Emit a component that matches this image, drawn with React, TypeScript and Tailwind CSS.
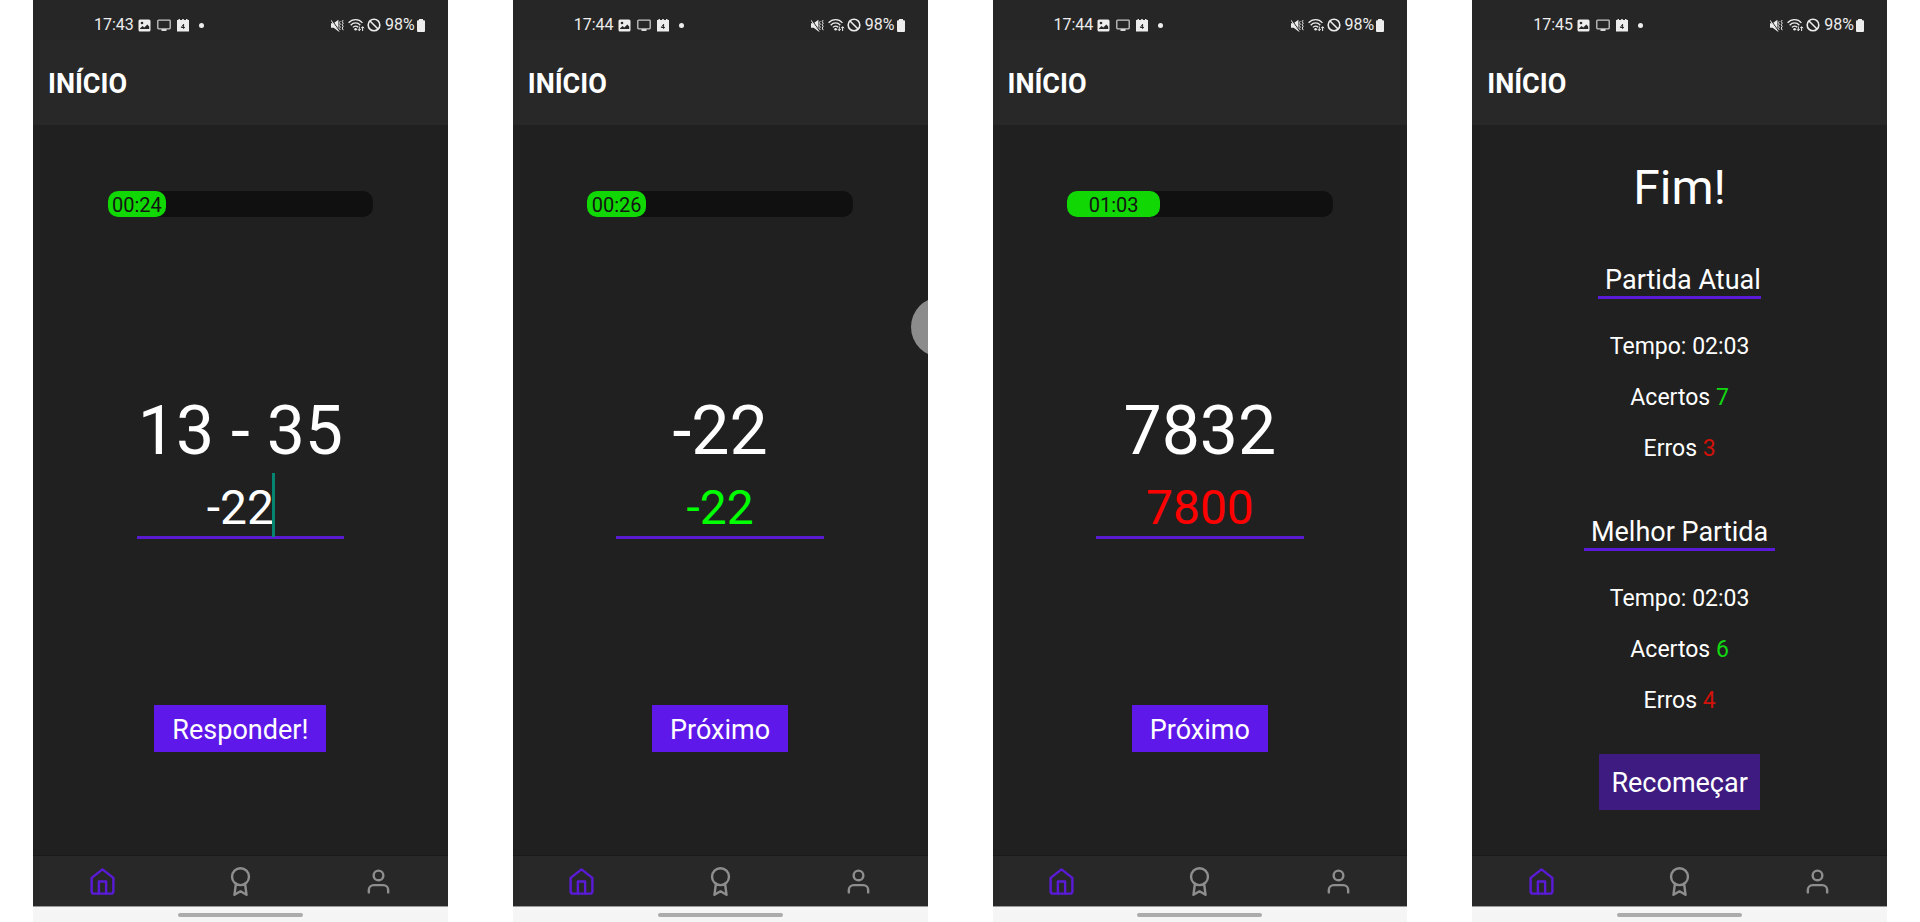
import type { ReactNode } from "react";
import { FiAward, FiHome, FiUser } from "react-icons/fi";

function StatusBar({ time }: { time: string }) {
  return (
    <div className="flex h-10 items-center justify-between bg-[#262626] pt-2.5 pl-[61px] pr-[23px] text-base leading-5 text-[#ededed]">
      <div className="flex items-center">
        <span>{time}</span>
        <svg className="ml-1" width="13" height="13" viewBox="0 0 13 13" aria-hidden="true">
          <rect x="0.5" y="0.5" width="12" height="12" rx="1.5" fill="#ededed" />
          <circle cx="4" cy="4" r="1.3" fill="#262626" />
          <path d="M2 9.5 4.5 7l1.8 1.6L9.3 5.5 11.2 7.6V10H2z" fill="#262626" />
        </svg>
        <svg className="ml-1.5" width="14" height="13" viewBox="0 0 14 13" aria-hidden="true">
          <rect x="0.8" y="1.2" width="12.4" height="8.6" rx="0.8" fill="none" stroke="#c8c8c8" strokeWidth="1.3" />
          <path d="M4.5 10h5v2h-5z" fill="#d8d8d8" />
        </svg>
        <svg className="ml-1.5" width="12" height="13" viewBox="0 0 12 13" aria-hidden="true">
          <path d="M0 1h1.500V0h1.500v1h2.200V0h1.600v1H9V0h1.500v1H12v11.500H0z" fill="#ededed" />
          <path d="M6.600 9.800V5.200L4.300 8.500h3.600" fill="none" stroke="#262626" strokeWidth="1" />
        </svg>
        <span className="ml-2.5 size-[5px] rounded-full bg-[#ededed]" />
      </div>
      <div className="flex items-center">
        <svg width="13" height="13" viewBox="0 0 13 13" aria-hidden="true">
          <path d="M0 4.2h2.6L7.4 0.8v11.4L2.6 8.8H0z" fill="#ededed" />
          <path d="M0.400 0.600 8.600 12.400" stroke="#262626" strokeWidth="1.2" />
          <path d="M0 1.200 8 12.600" stroke="#ededed" strokeWidth="1" />
          <path d="M9.300 2.200l-1 1.400 1 1.500-1 1.500 1 1.500-1 1.500 1 1.400M12.200 1l-1 1.600 1 1.600-1 1.600 1 1.600-1 1.600 1 2.200" fill="none" stroke="#ededed" strokeWidth="1" />
        </svg>
        <svg className="ml-1" width="17" height="14" viewBox="0 0 17 14" aria-hidden="true">
          <g fill="none" stroke="#ededed" strokeWidth="1.3">
            <path d="M0.600 4.800C4.400 0.600 10.800 0.600 14.400 4.800" />
            <path d="M2.700 7.200C5.400 4.200 9.700 4.200 12.300 7.200" />
            <path d="M4.900 9.400C6.500 7.700 8.600 7.700 10.100 9.200" />
          </g>
          <circle cx="7.6" cy="11.3" r="1.3" fill="#ededed" />
          <path d="M11.300 8.500v4M9.900 11.200l1.400 1.600 1.400-1.600M14.600 13V9M13.200 10.200l1.400-1.600 1.400 1.600" fill="none" stroke="#ededed" strokeWidth="1" />
        </svg>
        <svg className="ml-0.5" width="14" height="14" viewBox="0 0 14 14" aria-hidden="true">
          <circle cx="7" cy="7" r="5.8" fill="none" stroke="#ededed" strokeWidth="1.6" />
          <path d="m3 3 8 8" stroke="#ededed" strokeWidth="1.6" />
        </svg>
        <span className="ml-1">98%</span>
        <svg className="ml-0.5" width="8" height="13" viewBox="0 0 8 13" aria-hidden="true">
          <path d="M2 0h4v1.200H7a1 1 0 0 1 1 1V12a1 1 0 0 1-1 1H1a1 1 0 0 1-1-1V2.200a1 1 0 0 1 1-1h1z" fill="#ededed" />
        </svg>
      </div>
    </div>
  );
}

function TabBar() {
  return (
    <nav className="grid h-[51px] grid-cols-3 border-t border-[#1a1a1a] bg-[#282828] text-[#8e8e8e]">
      <a href="#inicio" aria-label="Início" className="flex items-center justify-center text-[#5a1ad8]">
        <FiHome size={29} />
      </a>
      <a href="#conquistas" aria-label="Conquistas" className="flex items-center justify-center">
        <FiAward size={29} />
      </a>
      <a href="#perfil" aria-label="Perfil" className="flex items-center justify-center">
        <FiUser size={29} />
      </a>
    </nav>
  );
}

function Phone({ time, children }: { time: string; children: ReactNode }) {
  return (
    <section className="flex flex-col bg-[#202020] text-white">
      <StatusBar time={time} />
      <header className="flex h-[85px] items-center bg-[#282828] px-[15px] pt-0.5">
        <h1 className="text-[27px] leading-8 font-bold">INÍCIO</h1>
      </header>
      <div className="relative flex flex-1 flex-col items-center overflow-hidden">{children}</div>
      <TabBar />
      <div className="flex h-4 items-center justify-center border-t border-[#9a9a9a] bg-[#f5f5f5]">
        <span className="h-1 w-[125px] rounded-full bg-[#ababab]" />
      </div>
    </section>
  );
}

interface GameProps {
  time: string;
  timer: string;
  progress: number;
  question: string;
  answer: string;
  answerClass: string;
  action: string;
  typing?: boolean;
  floatingHandle?: boolean;
}

function Game({ time, timer, progress, question, answer, answerClass, action, typing, floatingHandle }: GameProps) {
  return (
    <Phone time={time}>
      <div className="mt-[66px] h-[26px] w-[64%] rounded-[10px] bg-[#101010]">
        <div
          className="flex h-full items-center justify-center rounded-[10px] bg-[#11d804] pt-0.5 text-xl leading-6 text-[#141414]"
          style={{ width: `${progress}%` }}
        >
          {timer}
        </div>
      </div>
      <p className="mt-[174px] text-[68px] leading-[80px]">{question}</p>
      <div className="relative mt-0.5 w-1/2">
        <input
          type="text"
          aria-label="Resposta"
          defaultValue={answer}
          className={`block h-[66px] w-full border-b-3 border-[#5a1ad0] bg-transparent pt-1.5 text-center text-5xl leading-none outline-none ${answerClass}`}
        />
        {typing && <span className="pointer-events-none absolute top-0 left-1/2 ml-8 h-16 w-[3px] bg-[#058571]" />}
      </div>
      <button type="button" className="mt-[166px] h-[47px] bg-[#5f18ea] px-[18px] pt-0.5 text-[27px] leading-8">
        {action}
      </button>
      {floatingHandle && <span className="absolute top-[172px] -right-[43px] size-[60px] rounded-full bg-[#8c8c8c]" />}
    </Phone>
  );
}

function Score({ title, time, hits, misses }: { title: string; time: string; hits: number; misses: number }) {
  return (
    <>
      <h3 className="border-b-3 border-[#5a1ad8] text-[27px] leading-8 whitespace-pre">{title}</h3>
      <div className="mt-[34px] flex flex-col items-center gap-[23px] text-[23px] leading-7">
        <p>Tempo: {time}</p>
        <p>
          Acertos <span className="text-[#11d811]">{hits}</span>
        </p>
        <p>
          Erros <span className="text-[#d01208]">{misses}</span>
        </p>
      </div>
    </>
  );
}

export default function App() {
  return (
    <main className="grid min-h-screen grid-cols-4 gap-[65px] bg-white px-[33px] font-['Roboto',sans-serif]">
      <Game time="17:43" timer="00:24" progress={22} question="13 - 35" answer="-22" answerClass="text-white" action="Responder!" typing />
      <Game time="17:44" timer="00:26" progress={22} question="-22" answer="-22" answerClass="text-[#00ff00]" action="Próximo" floatingHandle />
      <Game time="17:44" timer="01:03" progress={35} question="7832" answer="7800" answerClass="text-[#ff0000]" action="Próximo" />
      <Phone time="17:45">
        <h2 className="mt-[34px] mb-12 text-5xl leading-[57px]">Fim!</h2>
        <Score title={"\u00a0Partida Atual"} time="02:03" hits={7} misses={3} />
        <div className="h-[53px]" />
        <Score title={"\u00a0Melhor Partida\u00a0"} time="02:03" hits={6} misses={4} />
        <button type="button" className="mt-[39px] h-14 bg-[#3d1b80] px-3 pt-0.5 text-[27px] leading-8">
          Recomeçar
        </button>
      </Phone>
    </main>
  );
}
